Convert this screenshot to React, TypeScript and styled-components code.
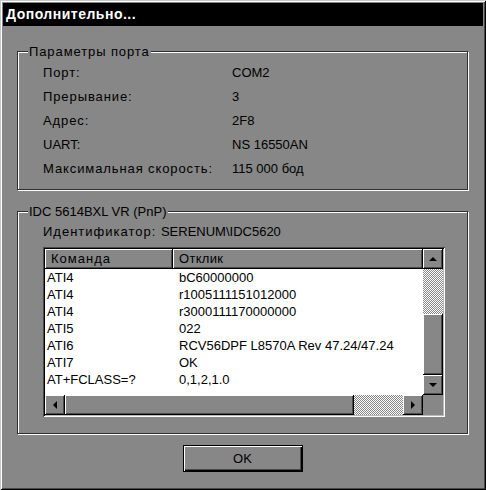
import React from 'react'
import styled, { createGlobalStyle } from 'styled-components'

const GRAY = '#878787'
const DARK = '#4a4a4a'

const GlobalStyle = createGlobalStyle`
html,body{margin:0;padding:0;background:${GRAY};}
body{font-family:"Liberation Sans",Arial,sans-serif;font-size:13px;color:#000;}
#root{width:486px;height:490px;}
`

// label, value, is the label cyrillic (wider in the original bitmap font)
const portInfo: [string, string, boolean][] = [
  ['Порт:', 'COM2', true],
  ['Прерывание:', '3', true],
  ['Адрес:', '2F8', true],
  ['UART:', 'NS 16550AN', false],
  ['Максимальная скорость:', '115 000 бод', true],
]

const responses = [
  ['ATI4', 'bC60000000'],
  ['ATI4', 'r1005111151012000'],
  ['ATI4', 'r3000111170000000'],
  ['ATI5', '022'],
  ['ATI6', 'RCV56DPF L8570A Rev 47.24/47.24'],
  ['ATI7', 'OK'],
  ['AT+FCLASS=?', '0,1,2,1.0'],
]

const Arrow = ({ dir }: { dir: 'up' | 'down' | 'left' | 'right' }) => {
  const vertical = dir === 'up' || dir === 'down'
  const pts = {
    up: '4,0 8,4 0,4',
    down: '0,0 8,0 4,4',
    left: '4,0 4,8 0,4',
    right: '0,0 4,4 0,8',
  }[dir]
  return (
    <svg width={vertical ? 8 : 4} height={vertical ? 4 : 8} viewBox={vertical ? '0 0 8 4' : '0 0 4 8'}>
      <polygon points={pts} fill="#000" />
    </svg>
  )
}

export default function App() {
  return (
    <>
      <GlobalStyle />
      <Window>
        <TitleBar>Дополнительно...</TitleBar>
        <Content>
          <Group $pb={9}>
            <Legend>Параметры порта</Legend>
            <InfoGrid>
              {portInfo.map(([k, v, cyr]) => (
                <React.Fragment key={k}>
                  <Label $ls={cyr ? 0.9 : 0}>{k}</Label>
                  <span>{v}</span>
                </React.Fragment>
              ))}
            </InfoGrid>
          </Group>

          <Group $pb={16} $mt={21}>
            <Legend $ls={0}>IDC 5614BXL VR (PnP)</Legend>
            <IdLine>
              <Label $ls={1}>Идентификатор: </Label>SERENUM\IDC5620
            </IdLine>
            <ListView>
              <ListMain>
                <Header>
                  <HeaderCell $w={128} $ls={1}>Команда</HeaderCell>
                  <HeaderCell $w={250} $ls={0.3}>Отклик</HeaderCell>
                </Header>
                {responses.map(([c, r], i) => (
                  <Row key={i}>
                    <Cell $pl={2}>{c}</Cell>
                    <Cell $pl={6}>{r}</Cell>
                  </Row>
                ))}
              </ListMain>
              <VScroll>
                <SButton><Arrow dir="up" /></SButton>
                <Track />
                <Thumb $size={61} />
                <SButton><Arrow dir="down" /></SButton>
              </VScroll>
              <HScroll>
                <SButton><Arrow dir="left" /></SButton>
                <Thumb $size={289} />
                <Track />
                <SButton><Arrow dir="right" /></SButton>
              </HScroll>
              <Corner />
            </ListView>
          </Group>

          <OkButton>OK</OkButton>
        </Content>
      </Window>
    </>
  )
}

const Window = styled.div`
  width:486px;
  height:490px;
  box-sizing:border-box;
  padding:3px;
  background:${GRAY};
  box-shadow:inset 1px 1px #c8c8c8, inset -1px -1px #000, inset 2px 2px #fff, inset -2px -2px ${DARK};
  display:flex;
  flex-direction:column;
`
const TitleBar = styled.div`
  height:23px;
  line-height:23px;
  background:#000;
  color:#fff;
  font-weight:bold;
  font-size:14px;
  letter-spacing:0.5px;
  padding-left:3px;
`
const Content = styled.div`
  display:flex;
  flex-direction:column;
  padding:25px 15px 0 14px;
`
const Group = styled.div<{ $pb: number; $mt?: number }>`
  border:1px solid #2e2e2e;
  box-shadow:inset 1px 1px #fff, 1px 1px #fff;
  padding:0 0 ${p => p.$pb}px 25px;
  margin-top:${p => p.$mt || 0}px;
`
const Legend = styled.div<{ $ls?: number }>`
  display:table;
  margin:-8px 0 0 -15px;
  padding:0 1px;
  line-height:15px;
  letter-spacing:${p => p.$ls ?? 0.9}px;
  background:${GRAY};
`
const InfoGrid = styled.div`
  display:grid;
  grid-template-columns:189px 1fr;
  grid-auto-rows:24px;
  align-items:center;
  margin-top:1px;
`
const Label = styled.span<{ $ls: number }>`
  letter-spacing:${p => p.$ls}px;
`
const IdLine = styled.div`
  margin-top:1px;
  line-height:24px;
  white-space:pre;
`
const ListView = styled.div`
  margin-top:3px;
  width:402px;
  height:170px;
  box-sizing:border-box;
  padding:2px;
  box-shadow:inset 1px 1px ${DARK}, inset -1px -1px #fff, inset 2px 2px #000, inset -2px -2px #b8b8b8;
  display:grid;
  grid-template-columns:1fr 20px;
  grid-template-rows:1fr 20px;
`
const ListMain = styled.div`
  background:#fff;
  overflow:hidden;
`
const Header = styled.div`
  display:flex;
  height:20px;
`
const HeaderCell = styled.div<{ $w: number; $ls: number }>`
  width:${p => p.$w}px;
  box-sizing:border-box;
  background:${GRAY};
  padding-left:6px;
  line-height:20px;
  letter-spacing:${p => p.$ls}px;
  box-shadow:inset -1px -1px #000, inset 1px 1px #fff, inset -2px -2px ${DARK};
`
const Row = styled.div`
  display:grid;
  grid-template-columns:128px 1fr;
  height:17px;
  line-height:17px;
  white-space:nowrap;
`
const Cell = styled.div<{ $pl: number }>`
  padding-left:${p => p.$pl}px;
`
const VScroll = styled.div`
  display:flex;
  flex-direction:column;
`
const HScroll = styled.div`
  display:flex;
`
const SButton = styled.div`
  flex:0 0 20px;
  width:20px;
  height:20px;
  box-sizing:border-box;
  background:${GRAY};
  display:flex;
  align-items:center;
  justify-content:center;
  box-shadow:inset -1px -1px #000, inset 1px 1px #fff, inset -2px -2px ${DARK};
`
const Track = styled.div`
  flex:1;
  background-color:#fff;
  background-image:repeating-conic-gradient(${GRAY} 0 25%, #fff 0 50%);
  background-size:2px 2px;
`
const Thumb = styled.div<{ $size: number }>`
  flex:0 0 ${p => p.$size}px;
  background:${GRAY};
  box-shadow:inset -1px -1px #000, inset 1px 1px #fff, inset -2px -2px ${DARK};
`
const Corner = styled.div`
  background:${GRAY};
`
const OkButton = styled.button`
  margin:11px auto 0;
  width:120px;
  height:27px;
  box-sizing:border-box;
  border:1px solid #000;
  background:${GRAY};
  font-family:"Liberation Sans",Arial,sans-serif;
  font-size:13px;
  color:#000;
  padding:0;
  box-shadow:inset 1px 1px #fff, inset -1px -1px #000, inset -2px -2px ${DARK};
`
